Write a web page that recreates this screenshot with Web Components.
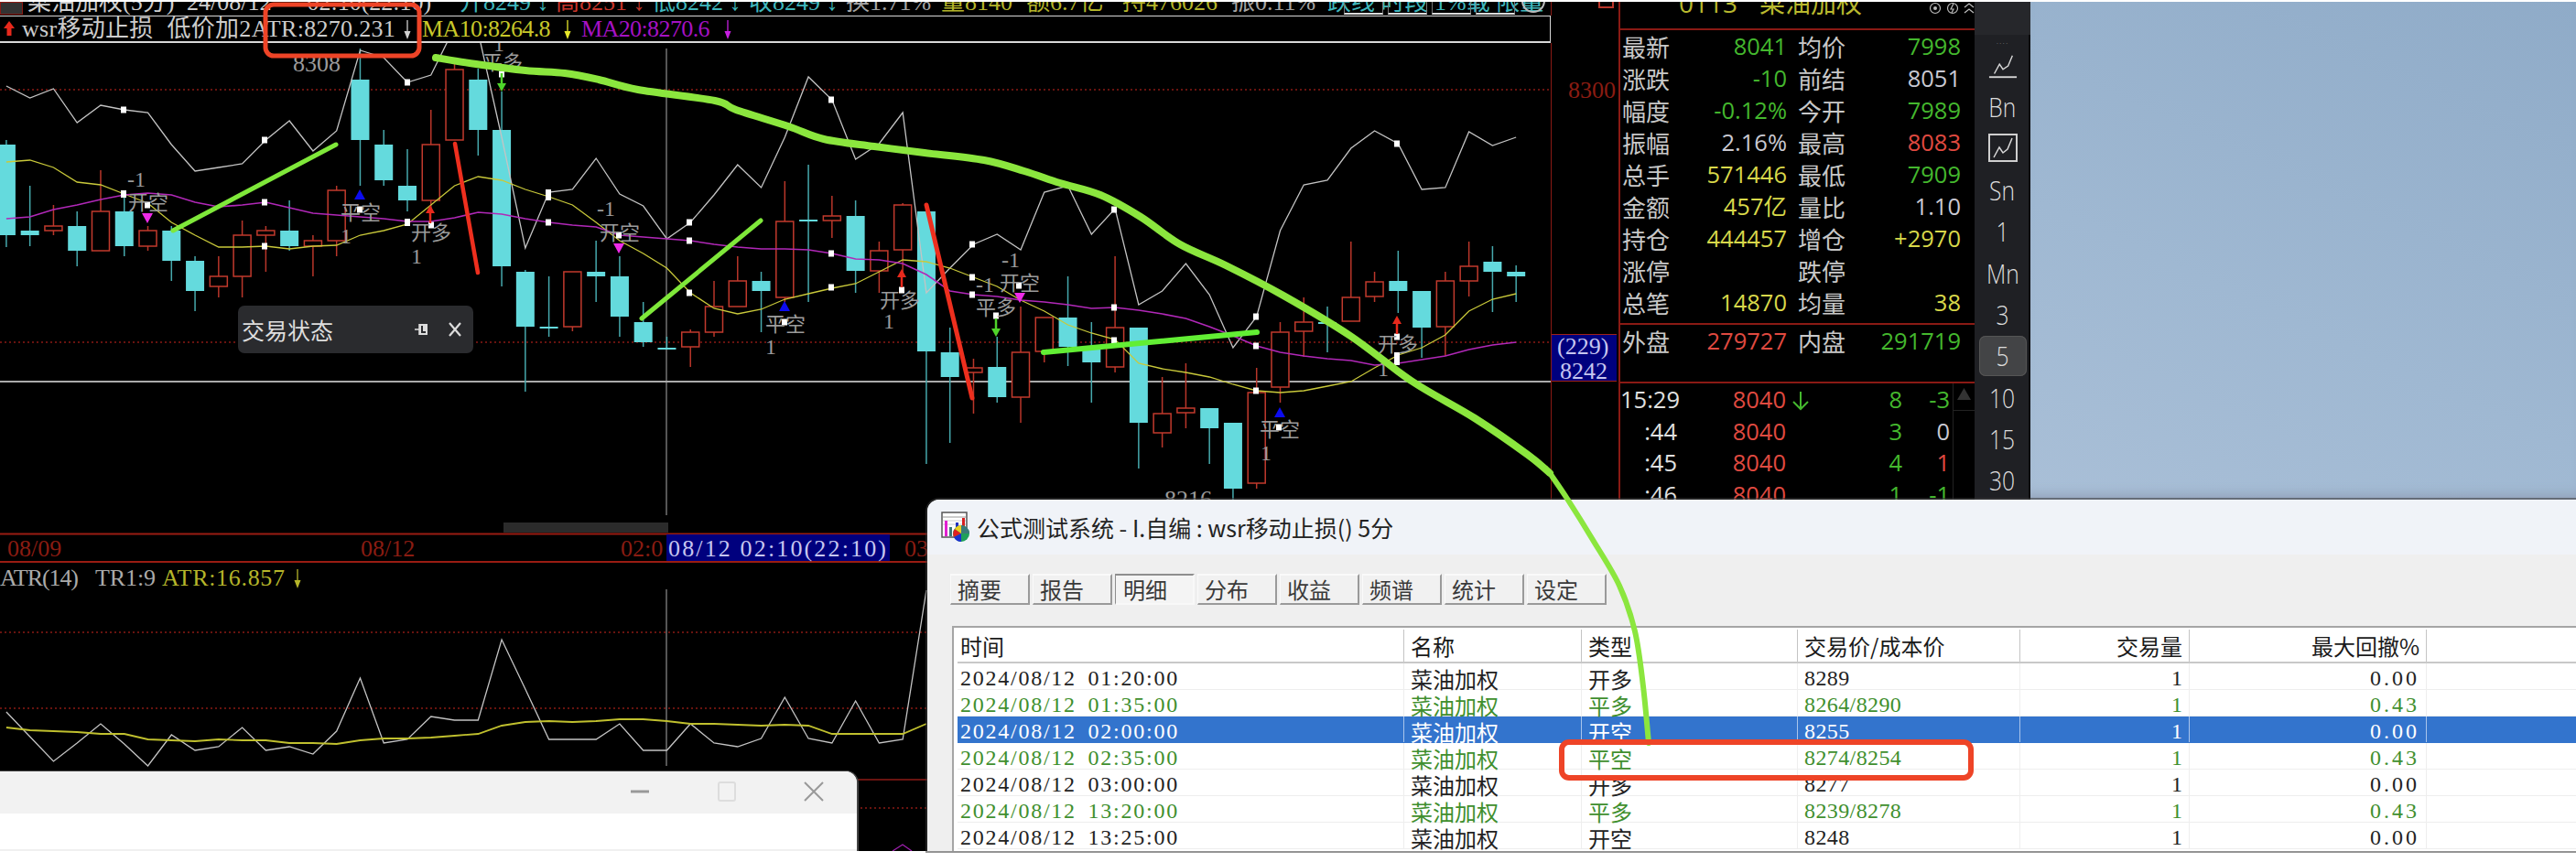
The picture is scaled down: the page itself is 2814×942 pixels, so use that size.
<!DOCTYPE html>
<html lang="zh">
<head>
<meta charset="utf-8">
<title>公式测试系统</title>
<style>
  html, body { margin: 0; padding: 0; background: #fff; }
  body { width: 2814px; height: 942px; overflow: hidden; position: relative; }
</style>
</head>
<body>
<trade-desk>
  <k-chart></k-chart>
  <quote-panel></quote-panel>
  <period-bar>
    <period-item icon="line"></period-item>
    <period-item>Bn</period-item>
    <period-item icon="box"></period-item>
    <period-item>Sn</period-item>
    <period-item>1</period-item>
    <period-item>Mn</period-item>
    <period-item>3</period-item>
    <period-item active>5</period-item>
    <period-item>10</period-item>
    <period-item>15</period-item>
    <period-item>30</period-item>
  </period-bar>
</trade-desk>
<float-tag>交易状态</float-tag>
<mini-window></mini-window>
<test-dialog title="公式测试系统 - I.自编 : wsr移动止损() 5分">
  <dialog-tab>摘要</dialog-tab>
  <dialog-tab>报告</dialog-tab>
  <dialog-tab active>明细</dialog-tab>
  <dialog-tab>分布</dialog-tab>
  <dialog-tab>收益</dialog-tab>
  <dialog-tab>频谱</dialog-tab>
  <dialog-tab>统计</dialog-tab>
  <dialog-tab>设定</dialog-tab>
  <trade-table slot="table"></trade-table>
</test-dialog>
<mark-up></mark-up>

<script>
const SERIF = '"Liberation Serif", "Noto Sans CJK SC", serif';
const SANS = '"Open Sans", "Noto Sans CJK SC", sans-serif';

// x of candle number i on the chart
const cx = (i) => 6.9 + i * 25.77;

// [index, red?, wick top, wick bottom, body top, body bottom]
const candles = [
  [0,0,153,270,158,257],[1,0,203,269,252,257],[2,1,224,257,247,252],[3,0,231,291,247,274],
  [4,1,186,274,231,274],[5,0,213,280,231,269],[6,1,247,274,252,269],[7,0,247,307,252,285],
  [8,0,280,340,285,318],[9,1,280,325,302,313],[10,1,241,325,257,302],[11,1,247,297,252,257],
  [12,0,219,274,252,269],[13,1,257,302,263,269],[14,1,203,280,208,263],[15,0,53,203,87,153],
  [16,0,142,203,158,197],[17,0,163,231,203,219],[18,1,120,233,158,219],[19,1,70,153,76,153],
  [20,0,75,170,87,142],[21,0,100,313,142,291],[22,0,295,428,297,357],[23,0,302,368,357,359],
  [24,1,297,362,297,357],[25,0,263,330,297,302],[26,0,280,368,302,346],[27,0,330,379,352,374],
  [28,0,368,382,380,382],[29,1,360,401,363,379],[30,1,307,368,335,363],[31,1,280,335,307,335],
  [32,0,297,363,307,318],[33,1,198,330,242,325],[34,0,180,330,240,242],[35,1,214,260,236,241],
  [36,0,219,320,236,296],[37,1,264,320,274,296],[38,1,222,300,224,273],[39,0,231,507,231,384],
  [40,0,358,484,385,412],[41,1,392,452,402,407],[42,0,368,440,401,434],[43,1,335,462,385,434],
  [44,1,347,396,347,384],[45,0,302,400,347,379],[46,0,352,440,380,396],[47,1,280,407,358,401],
  [48,0,358,512,358,462],[49,1,412,489,452,473],[50,1,397,468,446,451],[51,0,446,507,446,468],
  [52,0,462,547,462,534],[53,1,402,534,429,528],[54,1,352,440,363,423],[55,1,325,390,352,362],
  [56,0,335,385,352,354],[57,1,264,351,325,351],[58,1,297,330,308,324],[59,0,274,342,307,318],
  [60,0,318,391,318,358],[61,1,297,389,307,357],[62,1,264,324,291,307],[63,0,269,341,286,297],
  [64,0,290,330,297,302]
];

const whiteLine = [94,107,97,134,115,120,123,158,187,183,179,153,132,165,143,55,63,90,82,30,35,150,271,210,207,173,212,225,261,243,213,180,205,150,84,109,174,157,123,320,293,267,256,273,210,203,256,228,333,318,288,322,380,346,252,202,197,162,143,157,207,205,144,159,150];
const ma10 = [177,175,183,199,202,212,222,243,257,270,270,269,272,269,268,257,252,245,224,203,193,197,207,215,224,243,263,277,293,320,337,343,338,327,321,315,310,297,284,286,293,303,313,328,340,355,364,371,397,403,407,412,420,427,429,427,422,417,402,388,380,366,340,327,321];
const ma20 = [239,237,229,224,218,213,211,213,221,226,224,221,227,233,235,237,239,242,242,238,232,234,239,243,246,248,257,259,261,263,267,270,272,272,273,277,283,284,288,300,318,322,324,328,330,333,337,336,339,343,348,357,367,378,385,389,392,394,399,397,393,389,382,377,374];
const tr = [778,805,832,812,791,813,837,803,820,816,795,820,816,824,799,741,812,808,783,787,787,699,753,808,808,808,791,820,820,791,812,816,807,762,807,812,766,812,808,645];
const atr = [795,798,799,800,802,802,808,809,810,808,809,809,812,812,813,809,807,807,806,804,802,793,789,788,789,788,786,786,788,791,791,792,793,792,793,802,802,802,802,791];

// small white signal squares [x, y, height]
const squares = [[135,120,7],[289,153,7],[445,90,7],[548,81,7],[135,212,8],[161,224,7],[289,221,7],[289,269,7],[393,229,7],[445,243,8],[471,246,7],[599,213,12],[599,243,7],[676,257,7],[753,243,7],[753,263,7],[753,320,7],[857,352,7],[908,109,7],[908,277,7],[908,314,7],[1062,267,7],[1062,303,7],[1062,322,7],[1217,229,7],[1113,312,7],[985,317,7],[1088,345,7],[1217,336,7],[1217,372,7],[1372,346,7],[1372,378,7],[1372,427,7],[1397,467,7],[1526,368,7],[1526,392,14],[1526,157,7]];

// texts of the buy/sell signals [x, y, text, serif?]
const signals = [
  [139,204,'-1',1],[140,229,'开空'],[372,266,'1',1],[372,240,'平空'],[449,262,'开多'],[449,288,'1',1],
  [527,76,'平多'],[539,56,'1',1],[652,236,'-1',1],[655,262,'开空'],[836,362,'平空'],[836,387,'1',1],
  [961,336,'开多'],[965,359,'1',1],[1094,292,'-1',1],[1066,319,'-1',1],[1092,317,'开空'],[1066,344,'平多'],
  [1376,477,'平空'],[1377,503,'1',1],[1505,384,'开多'],[1505,411,'1',1]
];

const poly = (vals, color, w) =>
  `<polyline fill="none" stroke="${color}" stroke-width="${w}" points="${vals.map((y, i) => cx(i) + ',' + y).join(" ")}"/>`;

const triangle = (x, y, down, color) =>
  `<polygon fill="${color}" points="${x - 6},${down ? y : y + 11} ${x + 6},${down ? y : y + 11} ${x},${down ? y + 11 : y}"/>`;

const arrow = (x, y, down, color) => {
  const tip = down ? y + 20 : y;
  const base = down ? y : y + 20;
  const neck = down ? tip - 9 : tip + 9;
  return `<line x1="${x}" y1="${base}" x2="${x}" y2="${neck}" stroke="${color}" stroke-width="2.5"/>
    <polygon fill="${color}" points="${x - 5},${neck} ${x + 5},${neck} ${x},${tip}"/>`;
};

// thin long down arrow of the legend rows
const legendArrow = (color, w) =>
  `<svg width="${w}" height="24" viewBox="0 0 ${w} 24"><path d="M6 2v19" stroke="${color}" stroke-width="1.3"/><path d="M2.5 14L6 23l3.5-9z" fill="${color}"/></svg>`;

// smooth path through the hand-drawn points
const smooth = (pts) => {
  let d = `M${pts[0][0]} ${pts[0][1]}`;
  for (let i = 0; i < pts.length - 1; i++) {
    const p0 = pts[i - 1] || pts[i], p1 = pts[i], p2 = pts[i + 1], p3 = pts[i + 2] || p2;
    d += ` C${p1[0] + (p2[0] - p0[0]) / 6} ${p1[1] + (p2[1] - p0[1]) / 6} ${p2[0] - (p3[0] - p1[0]) / 6} ${p2[1] - (p3[1] - p1[1]) / 6} ${p2[0]} ${p2[1]}`;
  }
  return d;
};

class KChart extends HTMLElement {
  constructor() {
    super();
    this.attachShadow({ mode: "open" });
    const topItems = [
      [30, 174, "#cfcfcf", "菜油加权(5分)"], [204, 298, "#cfcfcf", "24/08/12 一 02:10(22:10)"],
      [502, 105, "#3fb7bd", "开8249 ↓"], [607, 105, "#c8352a", "高8251 ↓"], [712, 106, "#3fb7bd", "低8242 ↓"],
      [818, 106, "#3fb7bd", "收8249 ↓"], [924, 104, "#a5a5a5", "换1.71%"], [1028, 93, "#b5b52a", "量8140"],
      [1121, 105, "#b5b52a", "额6.7亿"], [1226, 119, "#b5b52a", "持476026"], [1345, 105, "#a5a5a5", "振0.11%"],
      [1450, 244, "#3fb7bd", "跌线 时段 1%载 限量"]
    ];
    const bodies = candles.map(([i, red, wt, wb, bt, bb]) => {
      const x = cx(i);
      const c = red ? "#b9362a" : "#46a9ad";
      let s = `<line x1="${x}" x2="${x}" y1="${wt}" y2="${bt}" stroke="${c}" stroke-width="1.5"/>
        <line x1="${x}" x2="${x}" y1="${bb}" y2="${wb}" stroke="${c}" stroke-width="1.5"/>`;
      s += red
        ? `<rect x="${x - 9.5}" y="${bt}" width="19" height="${bb - bt}" fill="#000" stroke="#c23a2d" stroke-width="1.5"/>`
        : `<rect x="${x - 10}" y="${bt}" width="20" height="${bb - bt}" fill="#64dadd"/>`;
      return s;
    }).join("");
    const dots = (y, x2) => `<line x1="0" x2="${x2}" y1="${y}" y2="${y}" stroke="#8a1a14" stroke-width="1.5" stroke-dasharray="2 3"/>`;
    this.shadowRoot.innerHTML = `<style>
      :host { display: block; width: 1768px; height: 928px; background: #000; overflow: hidden; font-family: ${SERIF}; font-size: 26px; color: #ccc; }
      .top { display: flex; height: 15px; overflow: hidden; position: relative; }
      .top span { flex: none; white-space: pre; line-height: 26px; margin-top: -12px; }
      .top .k { position: absolute; left: 0; top: 0; width: 25px; height: 14px; background: #333; border: 1px solid #8a1a14; box-sizing: border-box; }
      .top .btns { position: absolute; left: 1468px; top: 0; display: flex; gap: 5px; }
      .top .btns i { width: 43px; height: 14px; border-bottom: 2px solid #ddd; border-left: 1px solid #777; border-right: 1px solid #777; box-sizing: border-box; }
      .top .ring { position: absolute; left: 1662px; top: -14px; width: 26px; height: 26px; border: 2px solid #bbb; border-radius: 50%; box-sizing: border-box; }
      .top .axis { position: absolute; left: 1694px; top: 0; width: 74px; height: 15px; border-left: 1px solid #8a1a14; }
      .top .axis b { display: block; margin: 0 0 0 51px; width: 17px; height: 7px; border: 2px solid #b9362a; border-top: 0; box-sizing: border-box; }
      .legend { display: flex; align-items: center; width: 1694px; height: 30px; box-sizing: border-box; border: 1px solid #d8d8d8; border-bottom-width: 2px; border-left: 0; background: #000; position: relative; white-space: pre; }
      .legend svg { flex: none; }
      .legend span { flex: none; line-height: 26px; }
      svg.canvas { display: block; }
      text { font-family: ${SERIF}; font-size: 26px; }
      text.sig { font-family: "Noto Sans CJK SC", sans-serif; font-size: 22px; fill: #9b9b9b; }
      text.num { font-size: 24px; fill: #9b9b9b; }
    </style>
    <div class="top">
      <i class="k"></i>
      ${topItems.map(([x, w, c, t]) => `<span style="position:absolute;left:${x}px;width:${w}px;color:${c}">${t}</span>`).join("")}
      <div class="btns"><i></i><i></i><i></i><i></i></div>
      <i class="ring"></i>
      <div class="axis"><b></b></div>
    </div>
    <div class="legend">
      <svg width="24" height="24" viewBox="0 0 24 24"><path d="M10 3l6 8h-3.5v8h-5v-8H4z" fill="#e8291c"/></svg>
      <span style="width:415px;word-spacing:8px;letter-spacing:.3px">wsr移动止损 低价加2ATR:8270.231</span>
      ${legendArrow("#d0d0d0", 22)}
      <span style="width:153px;color:#c8c82a;letter-spacing:-.6px">MA10:8264.8</span>
      ${legendArrow("#e8e82a", 21)}
      <span style="width:154px;color:#a512c4;letter-spacing:-.6px">MA20:8270.6</span>
      ${legendArrow("#c61fe0", 12)}
    </div>
    <svg class="canvas" width="1768" height="883" viewBox="0 47 1768 883">
      ${dots(98, 1694)}${dots(374, 1694)}${dots(691, 1013)}${dots(774, 1013)}${dots(883, 1013)}
      <line x1="937" x2="1013" y1="852" y2="852" stroke="#6a1410" stroke-width="2"/>
      <line x1="0" x2="1694" y1="417" y2="417" stroke="#aaa" stroke-width="2"/>
      <line x1="728" x2="728" y1="53" y2="563" stroke="#aaa" stroke-width="1"/>
      <line x1="728" x2="728" y1="644" y2="837" stroke="#aaa" stroke-width="1"/>
      ${bodies}
      ${poly(whiteLine, "#c4c4c4", 1.3)}
      ${poly(ma10, "#c9c93a", 1.3)}
      ${poly(ma20, "#b128b8", 1.6)}
      ${squares.map(([x, y, h]) => `<rect x="${x - 3}" y="${y - h / 2}" width="6" height="${h}" fill="#fff"/>`).join("")}
      ${signals.map(([x, y, t, n]) => `<text class="${n ? "num" : "sig"}" x="${x}" y="${y}">${t}</text>`).join("")}
      ${triangle(161, 233, true, "#ee2be8")}${triangle(676, 266, true, "#ee2be8")}${triangle(1114, 320, true, "#ee2be8")}
      ${triangle(393, 207, false, "#0c0cf0")}${triangle(857, 329, false, "#0c0cf0")}${triangle(1398, 445, false, "#0c0cf0")}
      ${arrow(470, 224, false, "#e8291c")}${arrow(985, 294, false, "#e8291c")}${arrow(1526, 345, false, "#e8291c")}
      ${arrow(548, 80, true, "#4fd42a")}${arrow(1088, 348, true, "#4fd42a")}
      <text x="320" y="78" fill="#9b9b9b">8308</text>
      <text x="1272" y="554" fill="#9b9b9b">8216</text>
      <line x1="1694.5" x2="1694.5" y1="47" y2="930" stroke="#8a1a14"/>
      <text x="1713" y="107" fill="#8a1c12">8300</text>
      <rect x="1695" y="365" width="71" height="52" fill="#00007e"/>
      <line x1="1695" x2="1766" y1="365.5" y2="365.5" stroke="#a0221a"/>
      <line x1="1695" x2="1766" y1="416.5" y2="416.5" stroke="#a0221a"/>
      <text x="1701" y="387" fill="#c6c6f0">(229)</text>
      <text x="1704" y="414" fill="#c6c6f0">8242</text>
      <rect x="550" y="571" width="180" height="11" fill="#2b2b2b"/>
      <line x1="0" x2="1013" y1="583.5" y2="583.5" stroke="#9a1c12" stroke-width="2"/>
      <line x1="0" x2="1013" y1="614" y2="614" stroke="#9a1c12" stroke-width="2"/>
      <text x="8" y="608" fill="#8a1c12">08/09</text>
      <text x="394" y="608" fill="#8a1c12">08/12</text>
      <text x="678" y="608" fill="#8a1c12">02:0</text>
      <rect x="728" y="584" width="244" height="29" fill="#00007e"/>
      <text x="730" y="608" fill="#c6c6f0" style="white-space:pre" textLength="238">08/12 02:10(22:10)</text>
      <text x="988" y="608" fill="#8a1c12">03</text>
      <text x="0" y="640" fill="#aaa" textLength="86">ATR(14)</text>
      <text x="104" y="640" fill="#aaa" textLength="66">TR1:9</text>
      <text x="177" y="640" fill="#b5b52a" textLength="134">ATR:16.857</text>
      <g transform="translate(319,620)"><path d="M6 2v19" stroke="#b5b52a" stroke-width="1.3"/><path d="M2.5 14L6 23l3.5-9z" fill="#b5b52a"/></g>
      ${poly(tr, "#c4c4c4", 1.3)}
      ${poly(atr, "#c0c02e", 1.8)}
      <polyline fill="none" stroke="#a020b0" stroke-width="1.2" points="975,930 986,923 996,930"/>
    </svg>`;
  }
}

class QuotePanel extends HTMLElement {
  constructor() {
    super();
    this.attachShadow({ mode: "open" });
    const G = "#44b82e", W = "#c9c9d2", Y = "#d8d84a", R = "#e04a40";
    const rows = [
      ["最新", "8041", G, "均价", "7998", G], ["涨跌", "-10", G, "前结", "8051", W],
      ["幅度", "-0.12%", G, "今开", "7989", G], ["振幅", "2.16%", W, "最高", "8083", R],
      ["总手", "571446", Y, "最低", "7909", G], ["金额", "457亿", Y, "量比", "1.10", W],
      ["持仓", "444457", Y, "增仓", "+2970", Y], ["涨停", "", W, "跌停", "", W],
      ["总笔", "14870", Y, "均量", "38", Y]
    ];
    const row = ([a, b, c, d, e, f]) => `<div class="row">
        <span class="lb">${a}</span><span class="v" style="color:${c}">${b}</span>
        <span class="lb">${d}</span><span class="v" style="color:${f}">${e}</span></div>`;
    const ticks = [["15:29", "8040", "8", "-3", G], [":44", "8040", "3", "0", W], [":45", "8040", "4", "1", R], [":46", "8040", "1", "-1", G]];
    this.shadowRoot.innerHTML = `<style>
      :host { display: block; width: 389px; height: 544px; background: #000; border-left: 2px solid #8a1a14; box-sizing: border-box; overflow: hidden; font-family: ${SANS}; font-size: 25.5px; color: #ccc; }
      .head { height: 29px; display: flex; align-items: flex-start; overflow: hidden; position: relative; border-bottom: 2px solid #8a1a14; }
      .head span { position: absolute; top: -17px; line-height: 36px; color: #b9b92e; font-size: 28px; white-space: pre; }
      .head svg { position: absolute; top: 0; }
      .row { display: grid; grid-template-columns: 60px 120px 72px 118px; height: 35px; line-height: 35px; padding-left: 2px; white-space: nowrap; }
      .row .v { text-align: right; }
      .row .lb { font-family: "Noto Sans CJK SC", sans-serif; font-size: 26px; color: #c8c8c8; }
      .row .lb:nth-of-type(3) { padding-left: 12px; }
      .sec { padding-bottom: 5px; border-bottom: 2px solid #8a1a14; }
      .sec2 { height: 62px; border-bottom: 2px solid #8a1a14; }
      .ticks { position: relative; }
      .tick { display: grid; grid-template-columns: 62px 119px 50px 77px 52px; height: 34.5px; line-height: 34.5px; text-align: right; white-space: nowrap; }
      .tick .t { color: #e0e0e0; }
      .tick .arrow { text-align: left; padding-left: 5px; }
      .scroll { position: absolute; left: 363px; top: 0; width: 24px; height: 130px; border-left: 1px solid #222; }
      .scroll i { display: block; height: 24px; border-bottom: 1px solid #222; }
      .scroll svg { display: block; margin: 5px 0 0 4px; }
    </style>
    <div class="head">
      <span style="left:64px">0113</span><span style="left:152px">菜油加权</span>
      <svg style="left:337px" width="14" height="14" viewBox="0 0 14 14"><circle cx="7" cy="7" r="5.5" fill="none" stroke="#bbb" stroke-width="1.2"/><circle cx="7" cy="7" r="2" fill="#bbb"/></svg>
      <svg style="left:356px" width="14" height="14" viewBox="0 0 14 14"><circle cx="7" cy="7" r="5.5" fill="none" stroke="#bbb" stroke-width="1.2"/><path d="M8 2L5 8h3l-2 4" fill="none" stroke="#bbb" stroke-width="1.2"/></svg>
      <svg style="left:374px" width="14" height="14" viewBox="0 0 14 14"><path d="M2 6l5-4 5 4M2 12l5-4 5 4" fill="none" stroke="#bbb" stroke-width="1.3"/></svg>
    </div>
    <div class="sec">${rows.map(row).join("")}</div>
    <div class="sec2"><div class="row">
      <span class="lb">外盘</span><span class="v" style="color:${R}">279727</span>
      <span class="lb">内盘</span><span class="v" style="color:${G}">291719</span>
    </div></div>
    <div class="ticks">
      ${ticks.map(([t, p, v, d, c], n) => `<div class="tick">
        <span class="t">${t}</span><span style="color:${R}">${p}</span>
        <span class="arrow">${n === 0 ? `<svg width="22" height="24" viewBox="0 0 22 24" style="vertical-align:-4px"><path d="M11 2v19M3 13l8 8 8-8" fill="none" stroke="${G}" stroke-width="2"/></svg>` : ""}</span>
        <span style="color:${G}">${v}</span><span style="color:${c}">${d}</span></div>`).join("")}
      <div class="scroll"><i><svg width="15" height="13" viewBox="0 0 15 13"><path d="M7.5 0L15 13H0z" fill="#333"/></svg></i></div>
    </div>`;
  }
}

class PeriodItem extends HTMLElement {
  constructor() {
    super();
    this.attachShadow({ mode: "open" });
    const icon = this.getAttribute("icon");
    const spark = '<path d="M7 25L13 14l4 6 6-4 5-12" fill="none" stroke="#d8d8d8" stroke-width="1.5"/>';
    let inner = '<span class="t"><slot></slot></span>';
    if (icon === "line") {
      inner = `<svg width="32" height="32" viewBox="0 0 34 32">${spark}<line x1="1" x2="33" y1="29" y2="29" stroke="#d8d8d8" stroke-width="2"/></svg>`;
    }
    if (icon === "box") {
      inner = `<svg width="32" height="32" viewBox="0 0 32 32"><rect x="1" y="1" width="30" height="29" fill="none" stroke="#cfcfcf" stroke-width="2"/><path d="M6 26L12 15l4 6 5-4 5-12" fill="none" stroke="#d8d8d8" stroke-width="1.5"/></svg>`;
    }
    this.shadowRoot.innerHTML = `<style>
      :host { display: flex; justify-content: center; align-items: center; height: 45.3px; }
      .b { display: flex; align-items: center; justify-content: center; width: 52px; height: 44px; border-radius: 7px; }
      .t { display: block; transform: scaleX(.82); }
      :host([active]) .b { background: #434446; box-shadow: inset 0 0 0 1px #555; }
    </style><div class="b">${inner}</div>`;
  }
}

class PeriodBar extends HTMLElement {
  constructor() {
    super();
    this.attachShadow({ mode: "open" });
    this.shadowRoot.innerHTML = `<style>
      :host { display: block; width: 61px; height: 544px; background: #1f2024; overflow: hidden; font-family: "Open Sans", sans-serif; font-weight: 300; font-size: 30px; color: #ddd; box-shadow: inset -2px 0 0 #0c0c0e; }
      .cap { height: 36px; background: #26272b; }
      .dots { height: 11px; display: flex; align-items: center; justify-content: center; color: #777; font-size: 10px; line-height: 8px; letter-spacing: 1px; }
    </style><div class="cap"></div><div class="dots">....</div><slot></slot>`;
  }
}

class TradeDesk extends HTMLElement {
  constructor() {
    super();
    this.attachShadow({ mode: "open" });
    this.shadowRoot.innerHTML = `<style>
      :host { display: grid; grid-template-columns: 1768px 389px 61px 1fr; align-items: start; height: 928px; margin-top: 2px; position: relative; }
      .sky { height: 544px; background: linear-gradient(25deg, #a9bfd7 0%, #9fb8d2 40%, #8fabc8 100%); box-shadow: inset 0 -14px 14px -10px #8e9cb4; }
    </style><slot></slot><div class="sky"></div>`;
  }
}

class FloatTag extends HTMLElement {
  constructor() {
    super();
    this.attachShadow({ mode: "open" });
    this.shadowRoot.innerHTML = `<style>
      :host { position: absolute; left: 260px; top: 334px; width: 257px; height: 52px; display: flex; align-items: center; padding-left: 4px; box-sizing: border-box; background: #2a2b2e; border-radius: 7px; color: #ddd; font: 25px "Noto Sans CJK SC", sans-serif; }
      svg { position: absolute; }
    </style><slot></slot>
    <svg style="left:192px;top:17px" width="16" height="18" viewBox="0 0 16 18"><path d="M1 9h5M6 3v12" fill="none" stroke="#ddd" stroke-width="1.5"/><rect x="7" y="4" width="7" height="10" fill="none" stroke="#ddd" stroke-width="2"/><rect x="10" y="4" width="4" height="7" fill="#ddd"/></svg>
    <svg style="left:229px;top:17px" width="16" height="18" viewBox="0 0 16 18"><path d="M2 2l12 14M14 2L2 16" stroke="#ddd" stroke-width="2.2" fill="none"/></svg>`;
  }
}

class MiniWindow extends HTMLElement {
  constructor() {
    super();
    this.attachShadow({ mode: "open" });
    this.shadowRoot.innerHTML = `<style>
      :host { position: absolute; left: 0; top: 842px; width: 938px; height: 88px; box-sizing: border-box; background: #fff; border-top-right-radius: 14px; border-top: 1px solid #444; border-right: 2px solid #444; overflow: hidden; }
      .bar { height: 46px; background: #f2f2f2; position: relative; }
      .foot { position: absolute; left: 0; right: 0; bottom: 0; height: 2px; background: #f0f0f0; }
      svg { position: absolute; top: 11px; }
    </style>
    <div class="bar">
      <svg style="left:688px" width="22" height="22" viewBox="0 0 22 22"><line x1="1" x2="21" y1="11" y2="11" stroke="#999" stroke-width="3"/></svg>
      <svg style="left:783px" width="22" height="22" viewBox="0 0 22 22"><rect x="2" y="1" width="18" height="20" rx="2" fill="none" stroke="#ddd" stroke-width="2"/></svg>
      <svg style="left:878px" width="22" height="22" viewBox="0 0 22 22"><path d="M1 1l20 20M21 1L1 21" stroke="#999" stroke-width="2" fill="none"/></svg>
    </div><div class="foot"></div>`;
  }
}

class DialogTab extends HTMLElement {
  constructor() {
    super();
    this.attachShadow({ mode: "open" });
    this.shadowRoot.innerHTML = `<style>
      :host { display: block; width: 87px; height: 34px; box-sizing: border-box; padding-left: 7px; background: #f1f1f1; border-top: 2px solid #fafafa; border-left: 1px solid #fafafa; border-right: 2px solid #9a9a9a; border-bottom: 2px solid #9a9a9a; font: 24px/30px "Noto Sans CJK SC", sans-serif; color: #3a3a3a; }
      :host([active]) { background: #f4f4f4; border-color: #8e8e8e #f8f8f8 #f8f8f8 #8e8e8e; padding-left: 8px; }
    </style><slot></slot>`;
  }
}

class TradeTable extends HTMLElement {
  constructor() {
    super();
    this.attachShadow({ mode: "open" });
    const trades = [
      ["2024/08/12 01:20:00", "开多", "8289", "1", "0.00", 0],
      ["2024/08/12 01:35:00", "平多", "8264/8290", "1", "0.43", 1],
      ["2024/08/12 02:00:00", "开空", "8255", "1", "0.00", 2],
      ["2024/08/12 02:35:00", "平空", "8274/8254", "1", "0.43", 1],
      ["2024/08/12 03:00:00", "开多", "8277", "1", "0.00", 0],
      ["2024/08/12 13:20:00", "平多", "8239/8278", "1", "0.43", 1],
      ["2024/08/12 13:25:00", "开空", "8248", "1", "0.00", 0]
    ];
    const kinds = ["", "green", "sel"];
    this.shadowRoot.innerHTML = `<style>
      :host { display: block; height: 247px; box-sizing: border-box; border-top: 2px solid #a5a5a5; border-left: 2px solid #a5a5a5; background: #fff; padding: 2px 0 0 4px; overflow: hidden; font: 24px "Noto Sans CJK SC", sans-serif; color: #222; }
      .r { display: grid; grid-template-columns: 488px 194px 236px 243px 185px 259px 1fr; grid-template-rows: 28px; height: 29px; line-height: 33px; box-sizing: border-box; border-bottom: 1px solid #eee; white-space: nowrap; }
      .r > * { padding: 0 7px; border-right: 1px solid #eee; }
      .r > *:first-child { padding-left: 3px; }
      .r > *:last-child { border-right: 0; }
      .hd { height: 37px; grid-template-rows: 35px; line-height: 36px; border-bottom: 2px solid #c8c8c8; color: #1a1a1a; }
      .hd > * { border-right: 1px solid #c4c4c4; }
      .n { font-family: "Liberation Serif", serif; }
      .t { letter-spacing: 1.75px; word-spacing: 5px; }
      .p { letter-spacing: .4px; }
      .d { letter-spacing: 3px; }
      .ra { text-align: right; }
      .green { color: #3f8f2e; }
      .sel { background: #3374cd; color: #fff; border-bottom-color: #3374cd; }
      .sel > * { border-right-color: #a9c5ec; }
    </style>
    <div class="r hd"><span>时间</span><span>名称</span><span>类型</span><span>交易价/成本价</span><span class="ra">交易量</span><span class="ra">最大回撤%</span><span></span></div>
    ${trades.map(([t, k, p, v, d, s]) => `<div class="r ${kinds[s]}">
      <span class="n t">${t}</span><span>菜油加权</span><span>${k}</span>
      <span class="n p">${p}</span><span class="n ra">${v}</span><span class="n ra d">${d}</span><span></span></div>`).join("")}`;
  }
}

class TestDialog extends HTMLElement {
  constructor() {
    super();
    this.attachShadow({ mode: "open" });
    this.shadowRoot.innerHTML = `<style>
      :host { position: absolute; left: 1013px; top: 546px; right: 0; height: 384px; background: #efefef; border-top-left-radius: 13px; box-shadow: 0 0 0 2px rgba(60,60,60,.55); display: flex; flex-direction: column; overflow: hidden; }
      .title { height: 60px; flex: none; display: flex; align-items: center; gap: 7px; padding-left: 15px; box-sizing: border-box; background: #f0f3f8; font: 25px "Noto Sans CJK SC", sans-serif; color: #222; white-space: pre; }
      .tabs { display: flex; gap: 3px; padding: 21px 0 0 25px; height: 55px; flex: none; }
      .grid { margin: 2px 0 0 27px; }
    </style>
    <div class="title">
      <svg width="32" height="34" viewBox="0 0 32 34">
        <rect x="1" y="1" width="27" height="27" fill="#fff" stroke="#555" stroke-width="1.5"/>
        <line x1="2" x2="27" y1="6" y2="6" stroke="#999"/><line x1="2" x2="27" y1="10" y2="10" stroke="#ccc"/><line x1="2" x2="27" y1="14" y2="14" stroke="#ccc"/>
        <rect x="4" y="10" width="3" height="17" fill="#e020d0"/><rect x="9" y="17" width="3" height="10" fill="#3a7a7a"/><rect x="16" y="12" width="3" height="15" fill="#2030c0"/><rect x="23" y="7" width="3" height="20" fill="#d82020"/>
        <circle cx="22" cy="24" r="9" fill="#1fa05a"/><path d="M22 24V15a9 9 0 0 1 9 9z" fill="#3a7a7a"/><path d="M22 24l-8 4a9 9 0 0 1 1-9z" fill="#e02020"/><path d="M22 24l-8 4a9 9 0 0 0 8 5z" fill="#1a30d0"/><path d="M22 24l-7-5a9 9 0 0 1 7-4z" fill="#ecd020"/>
      </svg>
      <span>${this.getAttribute("title")}</span>
    </div>
    <div class="tabs"><slot></slot></div>
    <div class="grid"><slot name="table"></slot></div>`;
  }
}

class MarkUp extends HTMLElement {
  constructor() {
    super();
    this.attachShadow({ mode: "open" });
    const curve = [[476,63],[520,70],[574,77],[617,80],[654,87],[697,98],[781,110],[804,120],[861,138],[900,152],[955,160],[1010,167],[1075,175],[1119,187],[1158,200],[1202,213],[1246,237],[1289,267],[1339,290],[1402,323],[1475,367],[1543,417],[1611,457],[1669,497],[1693,517]];
    const tail = [[1693,517],[1712,545],[1740,590],[1769,640],[1786,690],[1795,750],[1801,812]];
    this.shadowRoot.innerHTML = `<style>
      :host { position: absolute; left: 0; top: 0; width: 2814px; height: 942px; pointer-events: none; }
      svg { display: block; }
    </style>
    <svg width="2814" height="942" viewBox="0 0 2814 942" fill="none" stroke-linecap="round" stroke-linejoin="round">
      <path d="${smooth(curve)}" stroke="#8be63e" stroke-width="8"/>
      <path d="${smooth(tail)}" stroke="#8be63e" stroke-width="6"/>
      <line x1="189" y1="252" x2="367" y2="158" stroke="#7fe83a" stroke-width="5"/>
      <line x1="701" y1="348" x2="831" y2="241" stroke="#7fe83a" stroke-width="5"/>
      <line x1="1140" y1="385" x2="1373" y2="363" stroke="#62ee34" stroke-width="6"/>
      <line x1="497" y1="157" x2="522" y2="298" stroke="#ee2f1e" stroke-width="4.5"/>
      <line x1="1012" y1="224" x2="1062" y2="435" stroke="#ee2f1e" stroke-width="5"/>
      <rect x="290" y="5" width="168" height="56" rx="9" stroke="#ee4427" stroke-width="5"/>
      <rect x="1706" y="811" width="447" height="39" rx="8" stroke="#ee4427" stroke-width="6"/>
    </svg>`;
  }
}

customElements.define("k-chart", KChart);
customElements.define("quote-panel", QuotePanel);
customElements.define("period-item", PeriodItem);
customElements.define("period-bar", PeriodBar);
customElements.define("trade-desk", TradeDesk);
customElements.define("float-tag", FloatTag);
customElements.define("mini-window", MiniWindow);
customElements.define("dialog-tab", DialogTab);
customElements.define("trade-table", TradeTable);
customElements.define("test-dialog", TestDialog);
customElements.define("mark-up", MarkUp);
</script>
</body>
</html>
